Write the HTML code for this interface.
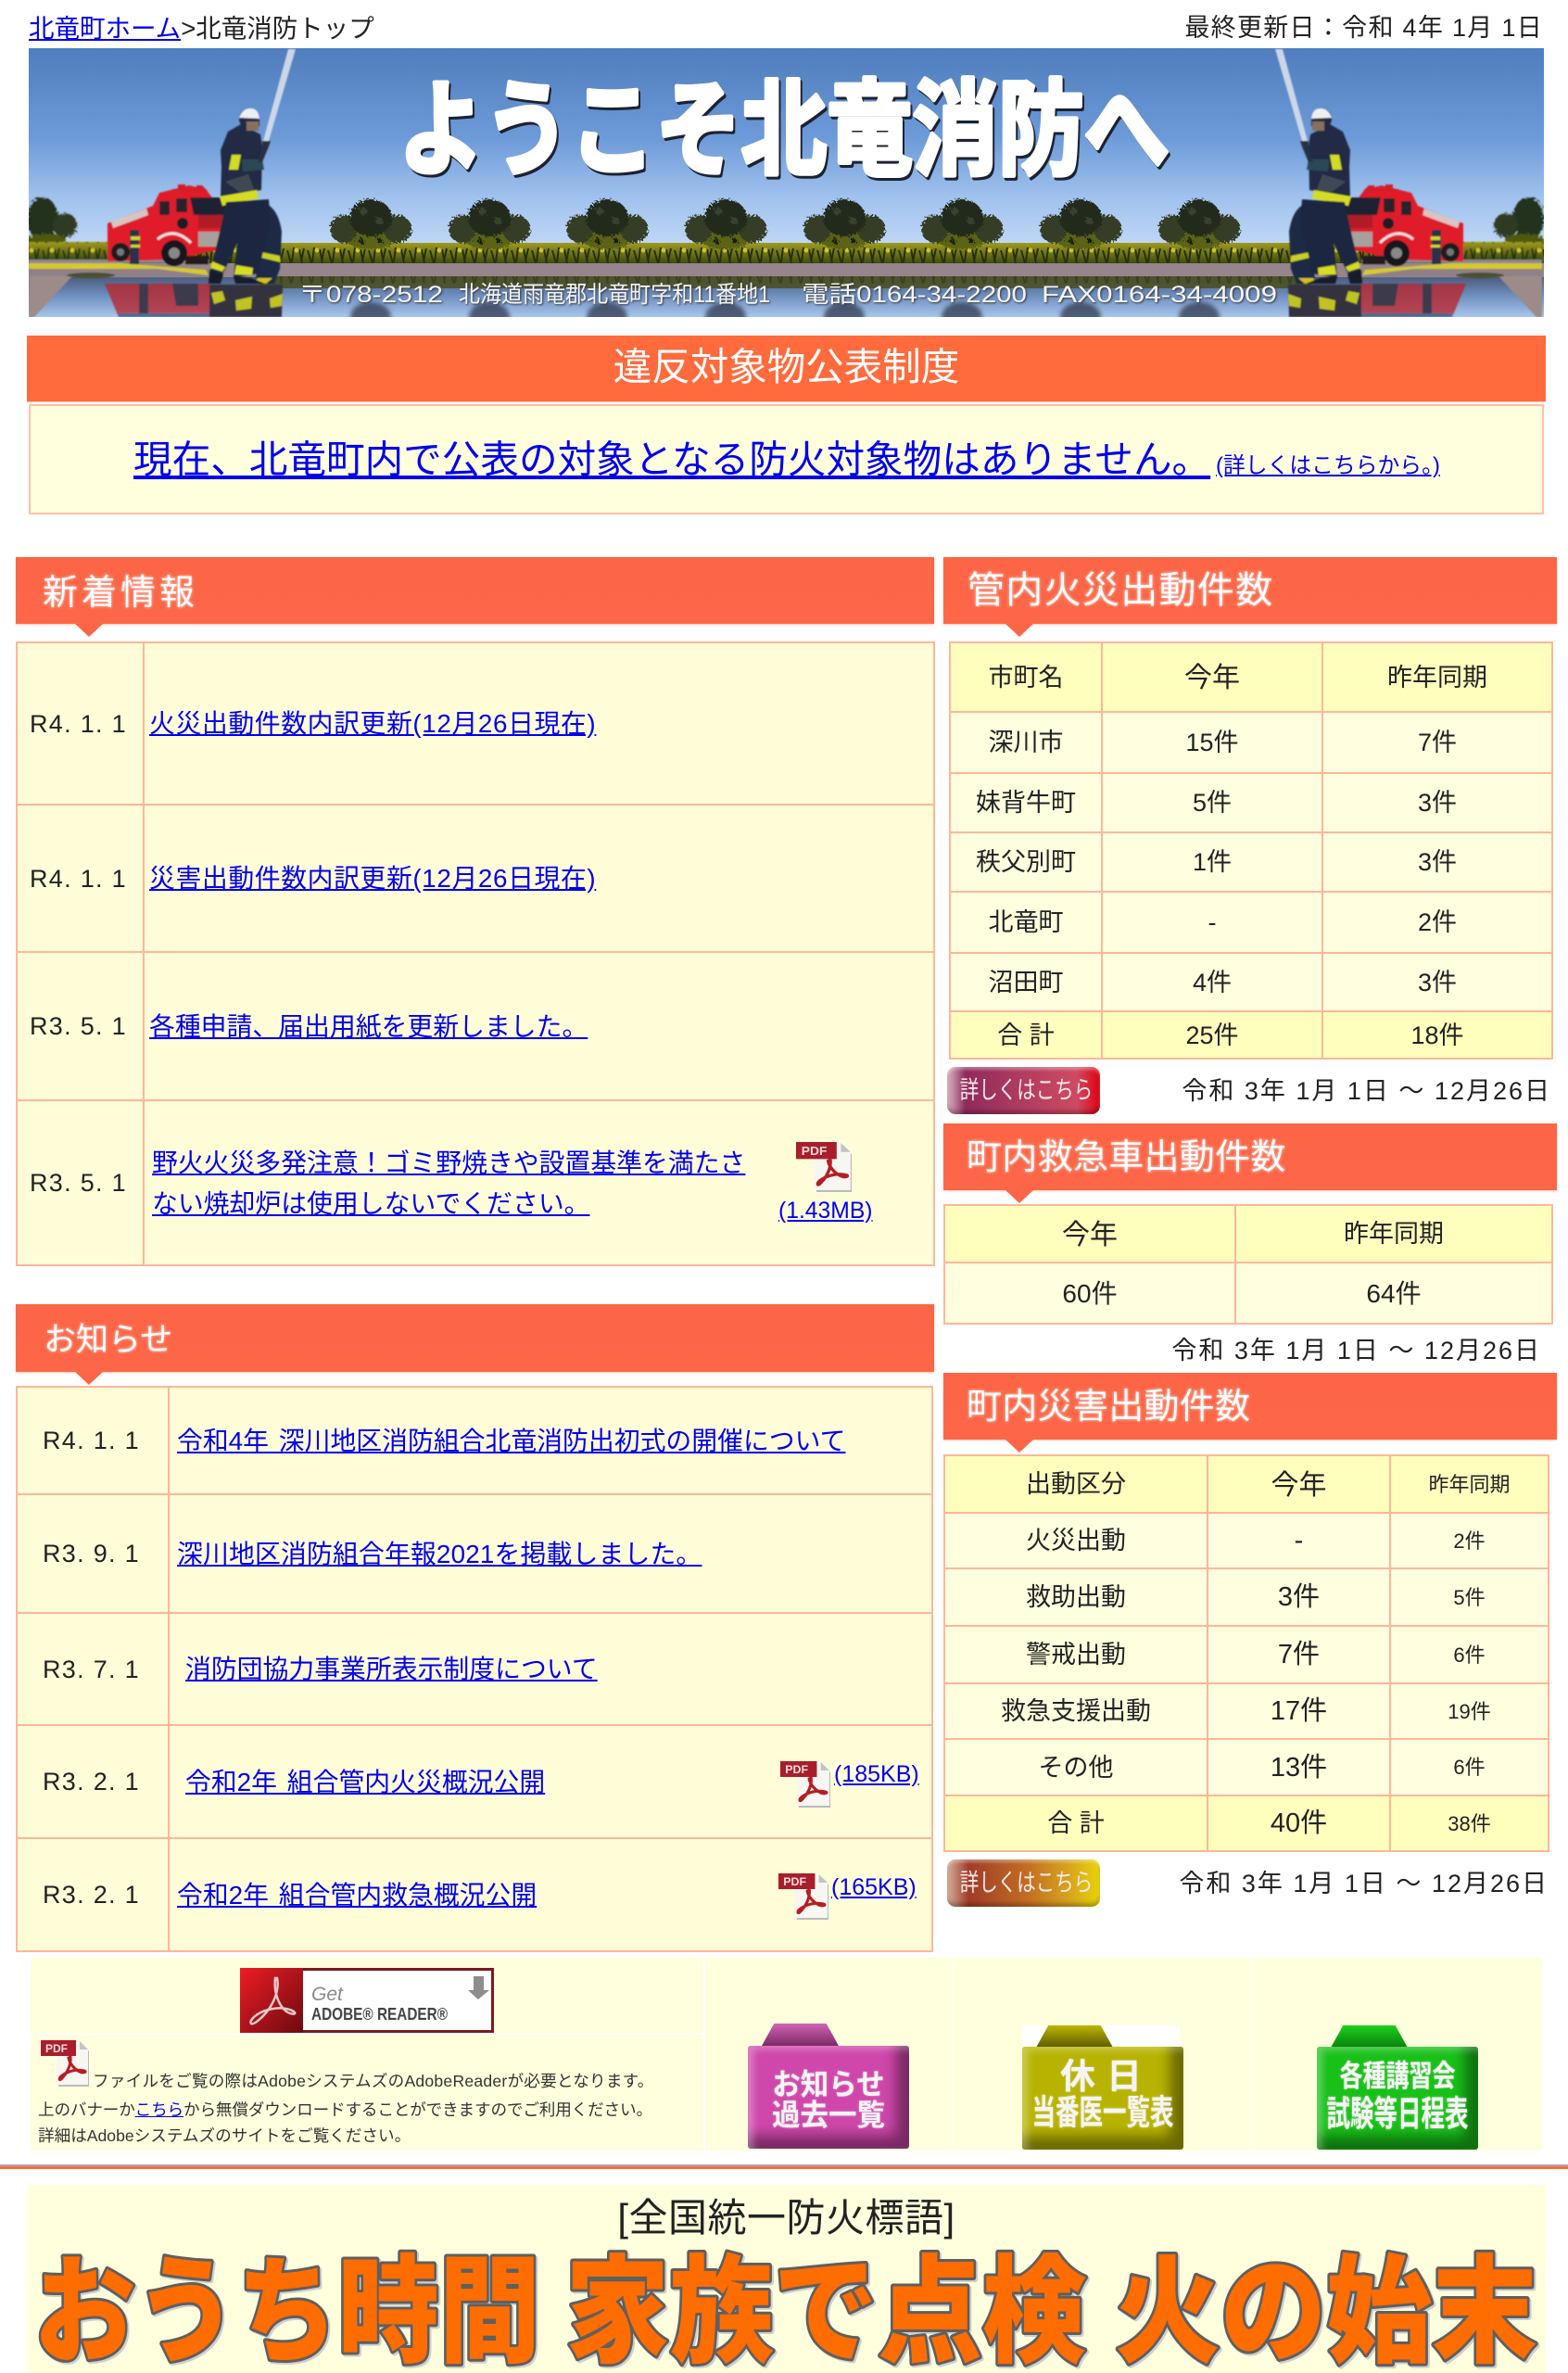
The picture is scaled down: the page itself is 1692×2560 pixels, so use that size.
<!DOCTYPE html>
<html lang="ja"><head><meta charset="utf-8"><title>北竜消防</title>
<style>
html,body{margin:0;padding:0;background:#fff}
body{position:relative;width:1692px;height:2560px;overflow:hidden;font-family:"Liberation Sans","Noto Sans CJK JP",sans-serif;color:#222}
a{color:#0000ee;text-decoration:underline}
.a{position:absolute;white-space:nowrap;line-height:1}
.bar{position:absolute;background:linear-gradient(#fc6546,#fd6748);box-shadow:0 1px 2px rgba(255,160,130,.6)}
.bar:after{content:"";position:absolute;left:var(--t);bottom:-14px;border-left:15px solid transparent;border-right:15px solid transparent;border-top:14px solid #fc6546}
.bt{position:absolute;color:#fff;white-space:nowrap;line-height:1;text-shadow:0 0 3px rgba(255,255,255,.75);font-weight:400}
table{position:absolute;border-collapse:collapse;table-layout:fixed;margin:0}
td{border:2px solid #ffb699;padding:2px 0 0;text-align:center;vertical-align:middle;line-height:1.1;white-space:nowrap;background:#ffffdf;font-size:27px}
td.h{background:#ffffbd}
.l td{background:#fffdd8;text-align:left;font-size:27.85px}
.l td:first-child{font-size:27px;letter-spacing:1.3px}
.l a{word-spacing:3px}
.n{letter-spacing:.6px}
.d{letter-spacing:2px;font-size:27px}
.btn{position:absolute;left:1022px;width:165px;height:51px;border-radius:9px;color:#f6e8e8;font-size:20.5px;line-height:51px;text-align:center;box-shadow:inset 0 3px 3px rgba(255,255,255,.35),inset 0 -4px 4px rgba(0,0,0,.25)}
.btn span{display:inline-block;transform:translateX(3px) scaleY(1.3)}
.fd{position:absolute;width:174px;height:111px;border-radius:3px;color:#f6f4f4;font-weight:700;text-align:center;box-shadow:inset 6px 4px 8px rgba(255,255,255,.3),inset -14px -14px 14px rgba(0,0,0,.42)}
.tab{position:absolute;width:83px;height:24px;clip-path:polygon(16% 0,84% 0,100% 100%,0 100%)}
.fd div{position:absolute;left:0;right:0;line-height:1;white-space:nowrap;text-shadow:0 0 2px rgba(255,255,255,.5)}
.fd span{display:inline-block}
</style></head><body>

<svg width="0" height="0" style="position:absolute"><defs>
<symbol id="pdf" viewBox="0 0 52 50" preserveAspectRatio="none">
<path d="M18 2H42L52 12V50H18Z" fill="#bbb" transform="translate(1 1)"/>
<path d="M17 1H42L51 10V48H17Z" fill="#f8f6f0"/>
<path d="M42 1V10H51Z" fill="#c4c4c4"/>
<rect x="0" y="0" width="38" height="17" fill="#a91e2c"/>
<text x="5" y="13" font-size="12" font-weight="700" fill="#f2dcdc" font-family="Liberation Sans,sans-serif">PDF</text>
<path d="M32 18C33 27 28 36 22 42C20 44 19 41 23 38C30 33 39 31 47 33C50 34 46 36 42 34C36 31 31 25 30 19Z" fill="none" stroke="#b51d24" stroke-width="3"/>
</symbol>
<linearGradient id="sky" x1="0" y1="0" x2="0" y2="1"><stop offset="0" stop-color="#4f7dbd"/><stop offset=".45" stop-color="#6d9ad8"/><stop offset=".75" stop-color="#a0c2ee"/><stop offset="1" stop-color="#c2d8f6"/></linearGradient>
<linearGradient id="wat" x1="0" y1="0" x2="0" y2="1"><stop offset="0" stop-color="#4a5a7a"/><stop offset=".45" stop-color="#6c8cbc"/><stop offset="1" stop-color="#a8c6ec"/></linearGradient>
<linearGradient id="hed" x1="0" y1="0" x2="0" y2="1"><stop offset="0" stop-color="#a09a20"/><stop offset=".6" stop-color="#666d14"/><stop offset="1" stop-color="#3c4a10"/></linearGradient>
<pattern id="hp" width="22" height="22" patternUnits="userSpaceOnUse" x="0" y="264"><path d="M2 6l4 14M9 3l-2 16M15 5l3 15M20 4l-3 14" stroke="#26300c" stroke-width="2" fill="none"/><circle cx="12" cy="6" r="2.5" fill="#d0c22e"/></pattern>
<filter id="rough" x="-15%" y="-15%" width="130%" height="130%"><feTurbulence type="fractalNoise" baseFrequency=".45" numOctaves="2" seed="3"/><feDisplacementMap in="SourceGraphic" scale="9"/></filter>
<filter id="bl"><feGaussianBlur stdDeviation="2.5"/></filter>
<filter id="bs"><feGaussianBlur stdDeviation=".8"/></filter>
<g id="tree" filter="url(#rough)">
<ellipse cx="0" cy="258" rx="27" ry="11" fill="#5a6412"/>
<circle cx="-29" cy="247" r="15" fill="#343c26"/><circle cx="29" cy="247" r="15" fill="#343c26"/>
<ellipse cx="0" cy="235" rx="23" ry="20" fill="#232b1b"/>
<circle cx="-8" cy="228" r="4" fill="#3a4230"/><circle cx="9" cy="238" r="4" fill="#3a4230"/>
<circle cx="-10" cy="260" r="3" fill="#141a08"/><circle cx="10" cy="260" r="3" fill="#141a08"/>
</g>
<g id="side">
<path d="M311 53H319L290 152H284Z" fill="#d9dfea" opacity=".9"/>
<g filter="url(#rough)"><ellipse cx="46" cy="236" rx="17" ry="23" fill="#23301a"/><circle cx="70" cy="243" r="13" fill="#2e3a22"/><ellipse cx="50" cy="260" rx="22" ry="8" fill="#4d5a10"/></g>
<rect x="31" y="261" width="85" height="19" fill="url(#hed)"/><rect x="31" y="261" width="85" height="19" fill="url(#hp)"/>
<rect x="31" y="280" width="195" height="4" fill="#8c8890"/>
<rect x="31" y="291" width="195" height="8" fill="#8f8087"/>
<path d="M31 298H78L37 342H31Z" fill="#9c8b88"/>
<path d="M31 284H130L222 291L225 297L170 290H31Z" fill="#d6c92e"/>
<ellipse cx="98" cy="297" rx="26" ry="3" fill="#4a5030"/>
<!-- truck -->
<path d="M116 241L165 222L172 208L204 200L222 204L243 232V268L188 280L116 282Z" fill="#e01f2b"/>
<path d="M186 204h6v-5h8v5h12v-4h6l6 6H186Z" fill="#d41a26"/>
<path d="M205 213H243L245 232H209Z" fill="#1c2433"/>
<path d="M172 217H183V232H172ZM190 214H202V229H190Z" fill="#2a242a"/>
<circle cx="197" cy="241" r="6" fill="#1c1c24"/>
<path d="M214 232H243V246H214Z" fill="#b01c28"/>
<path d="M214 250H243V266H214Z" fill="#a8a09c"/>
<path d="M120 239L158 225L160 232L122 246Z" fill="#d9c4c4"/>
<path d="M170 258Q188 244 206 262" fill="none" stroke="#efe4e4" stroke-width="3"/>
<circle cx="188" cy="273" r="14" fill="#17171a"/><circle cx="188" cy="273" r="6" fill="#888"/>
<circle cx="130" cy="272" r="10" fill="#1c1a1c"/><circle cx="130" cy="272" r="4" fill="#777"/>
<rect x="200" y="276" width="25" height="9" fill="#221c1e"/>
<path d="M140 248H150V285H140Z" fill="#2b3348"/><rect x="141" y="255" width="10" height="4" fill="#cfd82a"/><rect x="141" y="264" width="10" height="3" fill="#cfd82a"/>
<!-- rear firefighter -->
<path d="M282 218Q300 222 304 250L302 290L296 306H276L278 270Z" fill="#1c2944"/>
<path d="M282 272L302 276L303 283L282 278Z" fill="#c8d022"/>
<path d="M294 300H278L274 306H287Z" fill="#d4c21e"/>
<!-- front firefighter -->
<path d="M246 142L260 134L281 145L283 158L282 205L238 213L239 180L238 162Z" fill="#202c44"/>
<path d="M258 130Q258 117 270 118Q280 118 280 130L280 136L262 140Z" fill="#202c44"/>
<path d="M258 127Q262 116 272 117Q279 118 280 128Z" fill="#eef0f0"/>
<rect x="266" y="131" width="13" height="10" fill="#8a705c"/>
<path d="M261 172H283L285 183L262 185Z" fill="#2c4a56"/>
<path d="M283 152H292L290 158L283 175H278L283 160Z" fill="#283040"/>
<path d="M250 167H260L257 183H247Z" fill="#d3dc22"/>
<path d="M243 196L268 188L275 207H258Z" fill="#3f4a52"/>
<path d="M237 212L277 205L279 214L240 222Z" fill="#d6dc20"/>
<path d="M244 218L290 215L292 240L278 295L252 300L256 262L240 296L227 292L236 255Z" fill="#1b2740"/>
<path d="M229 282L243 288L240 293L227 289Z" fill="#d6dc20"/>
<path d="M255 286L273 289L272 297L253 296Z" fill="#d6dc20"/>
<path d="M226 291L241 296L238 306H225ZM252 298L271 300L286 306H254Z" fill="#161c2c"/>
<!-- reflection -->
<path d="M113 306H226L226 342H128Z" fill="#b82430" opacity=".8"/>
<path d="M150 306H160V342H150ZM186 306H214V330H190Z" fill="#3d3a4c"/>
<path d="M128 338H226V342H128Z" fill="#506890"/>
<path d="M226 307H305L304 342H226Z" fill="#34303f"/>
<path d="M228 316L240 314L243 324L231 328ZM254 324L272 320L271 333L255 335ZM291 322L305 317L304 330L292 332Z" fill="#c0c420"/>
</g>
</defs></svg>

<div class="a" style="left:31px;top:17px;font-size:27.5px"><a>北竜町ホーム</a>&gt;北竜消防トップ</div>
<div class="a" style="right:27px;top:17px;font-size:27px;letter-spacing:1.3px">最終更新日：令和 4年 1月 1日</div>

<!-- Banner -->
<svg class="a" style="left:31px;top:52px" width="1635" height="290" viewBox="31 52 1635 290">
<rect x="31" y="52" width="1635" height="215" fill="url(#sky)"/>
<rect x="31" y="298" width="1635" height="44" fill="url(#wat)"/>
<rect x="31" y="284" width="1635" height="15" fill="#96858c"/>
<rect x="31" y="262" width="1635" height="22" fill="url(#hed)"/>
<rect x="31" y="262" width="1635" height="22" fill="url(#hp)"/>
<rect x="280" y="298" width="1135" height="13" fill="#4a4f20" opacity=".85"/>
<rect x="280" y="298" width="1135" height="13" fill="url(#hp)" opacity=".5"/>
<use href="#tree" x="400"/><use href="#tree" x="528"/><use href="#tree" x="655"/><use href="#tree" x="783"/><use href="#tree" x="911"/><use href="#tree" x="1038"/><use href="#tree" x="1166"/><use href="#tree" x="1294"/>
<g fill="#23263a" opacity=".65" filter="url(#bl)"><ellipse cx="400" cy="342" rx="22" ry="16"/><ellipse cx="528" cy="342" rx="22" ry="16"/><ellipse cx="655" cy="342" rx="22" ry="16"/><ellipse cx="783" cy="342" rx="22" ry="16"/><ellipse cx="911" cy="342" rx="22" ry="16"/><ellipse cx="1038" cy="342" rx="22" ry="16"/><ellipse cx="1166" cy="342" rx="22" ry="16"/><ellipse cx="1294" cy="342" rx="22" ry="16"/></g>
<g filter="url(#bs)"><use href="#side"/></g>
<g filter="url(#bs)"><use href="#side" transform="translate(1695 0) scale(-1 1)"/></g>
<g style="filter:drop-shadow(2px 3px 0 #1c2230)">
<text x="430" y="179" font-size="112" font-weight="700" fill="#fff" stroke="#fff" stroke-width="5" stroke-linejoin="round" textLength="832" lengthAdjust="spacingAndGlyphs" font-family="Noto Sans CJK JP,sans-serif">ようこそ北竜消防へ</text>
</g>
<g fill="#f4f4f4" font-size="25" font-family="Liberation Sans,Noto Sans CJK JP,sans-serif" style="filter:drop-shadow(1px 1px 1px #333)">
<text x="322" y="326" textLength="156" lengthAdjust="spacingAndGlyphs">〒078-2512</text>
<text x="495" y="326" textLength="336" lengthAdjust="spacingAndGlyphs">北海道雨竜郡北竜町字和11番地1</text>
<text x="865" y="326" textLength="243" lengthAdjust="spacingAndGlyphs">電話0164-34-2200</text>
<text x="1124" y="326" textLength="254" lengthAdjust="spacingAndGlyphs">FAX0164-34-4009</text>
</g>
</svg>

<!-- 違反 -->
<div class="a" style="left:29px;top:362px;width:1639px;height:71px;background:#ff6b3d;color:#fff;text-align:center;font-size:41.5px;line-height:68px;box-shadow:0 1px 0 #ffc4ad">違反対象物公表制度</div>
<div class="a" style="left:31px;top:436px;width:1631px;height:115px;background:#ffffdd;border:2px solid #ffbfa6"></div>
<div class="a" style="left:144px;top:475px;font-size:41.6px"><a>現在、北竜町内で公表の対象となる防火対象物はありません。</a></div>
<div class="a" style="left:1312px;top:491px;font-size:23.8px"><a>(詳しくはこちらから。)</a></div>

<!-- 新着情報 -->
<div class="bar" style="left:17px;top:601px;width:991px;height:72px;--t:64px"></div>
<div class="bt" style="left:46px;top:621px;font-size:38px;letter-spacing:4px">新着情報</div>
<table class="l" style="left:17px;top:692px;width:990px">
<colgroup><col style="width:137px"><col style="width:853px"></colgroup>
<tr style="height:175px"><td style="padding-left:13px">R4. 1. 1</td><td style="padding-left:5px"><a class="n">火災出動件数内訳更新(12月26日現在)</a></td></tr>
<tr style="height:159px"><td style="padding-left:13px">R4. 1. 1</td><td style="padding-left:5px"><a class="n">災害出動件数内訳更新(12月26日現在)</a></td></tr>
<tr style="height:160px"><td style="padding-left:13px">R3. 5. 1</td><td style="padding-left:5px"><a>各種申請、届出用紙を更新しました。</a></td></tr>
<tr style="height:178px"><td style="padding-left:13px">R3. 5. 1</td><td style="padding-left:8px;line-height:44px"><a>野火火災多発注意！ゴミ野焼きや設置基準を満たさ<br>ない焼却炉は使用しないでください。</a></td></tr>
</table>
<svg class="a" style="left:859px;top:1232px" width="60" height="54"><use href="#pdf" width="60" height="54"/></svg>
<div class="a" style="left:840px;top:1295px;font-size:24.7px"><a>(1.43MB)</a></div>

<!-- お知らせ -->
<div class="bar" style="left:17px;top:1407px;width:991px;height:73px;--t:64px"></div>
<div class="bt" style="left:47px;top:1428px;font-size:35px">お知らせ</div>
<table class="l" style="left:17px;top:1495px;width:988px">
<colgroup><col style="width:164px"><col style="width:824px"></colgroup>
<tr style="height:116px"><td style="padding-left:27px">R4. 1. 1</td><td style="padding-left:8px"><a>令和4年 深川地区消防組合北竜消防出初式の開催について</a></td></tr>
<tr style="height:128px"><td style="padding-left:27px">R3. 9. 1</td><td style="padding-left:8px"><a class="n" style="letter-spacing:.15px">深川地区消防組合年報2021を掲載しました。 </a></td></tr>
<tr style="height:121px"><td style="padding-left:27px">R3. 7. 1</td><td style="padding-left:17px"><a>消防団協力事業所表示制度について</a></td></tr>
<tr style="height:122px"><td style="padding-left:27px">R3. 2. 1</td><td style="padding-left:17px"><a>令和2年 組合管内火災概況公開</a></td></tr>
<tr style="height:122px"><td style="padding-left:27px">R3. 2. 1</td><td style="padding-left:8px"><a>令和2年 組合管内救急概況公開</a></td></tr>
</table>
<svg class="a" style="left:842px;top:1900px" width="54" height="50"><use href="#pdf" width="54" height="50"/></svg>
<div class="a" style="left:900px;top:1902px;font-size:25px"><a>(185KB)</a></div>
<svg class="a" style="left:840px;top:2021px" width="54" height="50"><use href="#pdf" width="54" height="50"/></svg>
<div class="a" style="left:897px;top:2024px;font-size:25px"><a>(165KB)</a></div>

<!-- 管内火災 -->
<div class="bar" style="left:1018px;top:601px;width:662px;height:72px;--t:67px"></div>
<div class="bt" style="left:1044px;top:617px;font-size:40px;letter-spacing:1.3px">管内火災出動件数</div>
<table style="left:1024px;top:692px;width:650px">
<colgroup><col style="width:164px"><col style="width:238px"><col style="width:248px"></colgroup>
<tr style="height:75px"><td class="h">市町名</td><td class="h" style="font-size:30px">今年</td><td class="h">昨年同期</td></tr>
<tr style="height:66px"><td>深川市</td><td>15件</td><td>7件</td></tr>
<tr style="height:64px"><td>妹背牛町</td><td>5件</td><td>3件</td></tr>
<tr style="height:64px"><td>秩父別町</td><td>1件</td><td>3件</td></tr>
<tr style="height:66px"><td>北竜町</td><td>-</td><td>2件</td></tr>
<tr style="height:63px"><td>沼田町</td><td>4件</td><td>3件</td></tr>
<tr style="height:51px"><td class="h">合 計</td><td class="h">25件</td><td class="h">18件</td></tr>
</table>
<div class="btn" style="top:1151px;background:linear-gradient(90deg,#dcb8c4 0,#8f2a5c 12%,#b23c60 50%,#cf4a62 85%,#e00010 100%)"><span>詳しくはこちら</span></div>
<div class="a d" style="right:18px;top:1164px">令和 3年 1月 1日 〜 12月26日</div>

<!-- 救急車 -->
<div class="bar" style="left:1018px;top:1212px;width:662px;height:72px;--t:67px"></div>
<div class="bt" style="left:1043px;top:1230px;font-size:38px;letter-spacing:.3px">町内救急車出動件数</div>
<table style="left:1018px;top:1299px;width:656px">
<colgroup><col style="width:314px"><col style="width:342px"></colgroup>
<tr style="height:62px"><td class="h" style="font-size:30px">今年</td><td class="h">昨年同期</td></tr>
<tr style="height:66px"><td style="font-size:28px">60件</td><td style="font-size:28px">64件</td></tr>
</table>
<div class="a d" style="right:29px;top:1444px">令和 3年 1月 1日 〜 12月26日</div>

<!-- 災害 -->
<div class="bar" style="left:1018px;top:1481px;width:662px;height:72px;--t:67px"></div>
<div class="bt" style="left:1043px;top:1499px;font-size:38px;letter-spacing:.3px">町内災害出動件数</div>
<table style="left:1018px;top:1569px;width:652px">
<colgroup><col style="width:284px"><col style="width:197px"><col style="width:171px"></colgroup>
<tr style="height:62px"><td class="h">出動区分</td><td class="h" style="font-size:30px">今年</td><td class="h" style="font-size:22px">昨年同期</td></tr>
<tr style="height:60px"><td>火災出動</td><td style="font-size:29px">-</td><td style="font-size:22px">2件</td></tr>
<tr style="height:62px"><td>救助出動</td><td style="font-size:29px">3件</td><td style="font-size:22px">5件</td></tr>
<tr style="height:62px"><td>警戒出動</td><td style="font-size:29px">7件</td><td style="font-size:22px">6件</td></tr>
<tr style="height:60px"><td>救急支援出動</td><td style="font-size:29px">17件</td><td style="font-size:22px">19件</td></tr>
<tr style="height:61px"><td>その他</td><td style="font-size:29px">13件</td><td style="font-size:22px">6件</td></tr>
<tr style="height:60px"><td class="h">合 計</td><td class="h" style="font-size:29px">40件</td><td class="h" style="font-size:22px">38件</td></tr>
</table>
<div class="btn" style="top:2006px;background:linear-gradient(90deg,#d6b09c 0,#a03c28 14%,#c06a22 50%,#d8a41c 80%,#e8d408 100%)"><span>詳しくはこちら</span></div>
<div class="a d" style="right:21px;top:2019px">令和 3年 1月 1日 〜 12月26日</div>

<!-- bottom table -->
<div class="a" style="left:33px;top:2112px;width:1631px;height:208px;background:#ffffdd"></div>
<div class="a" style="left:33px;top:2193px;width:726px;height:2px;background:#fff"></div>
<div class="a" style="left:759px;top:2112px;width:2px;height:208px;background:#fff"></div>
<div class="a" style="left:1027px;top:2112px;width:2px;height:208px;background:#fffff0"></div>
<div class="a" style="left:1349px;top:2112px;width:2px;height:208px;background:#fffff0"></div>

<!-- Adobe -->
<svg class="a" style="left:259px;top:2123px" width="274" height="70">
<defs><linearGradient id="ar" x1="0" y1="0" x2="1" y2="1"><stop offset="0" stop-color="#ee1c25"/><stop offset="1" stop-color="#6d0a10"/></linearGradient></defs>
<rect width="274" height="70" fill="#7a1a20"/><rect width="68" height="70" fill="url(#ar)"/>
<rect x="68" y="3" width="203" height="64" fill="#fff"/>
<path d="M40 11C43 25 35 45 18 58C11 63 9 59 15 53C25 44 46 40 58 47C62 50 56 51 50 47C42 41 36 26 38 11Z" fill="none" stroke="#e8c8c8" stroke-width="2.5"/>
<text x="77" y="35" font-size="21" font-style="italic" fill="#8a8a8a" font-family="Liberation Sans,sans-serif">Get</text>
<text x="77" y="56" font-size="18.5" font-weight="700" fill="#444" font-family="Liberation Sans,sans-serif" textLength="147" lengthAdjust="spacingAndGlyphs">ADOBE® READER®</text>
<path d="M252 9H263V24H269L257 34L246 24H252Z" fill="#8d8d8d"/>
</svg>
<svg class="a" style="left:44px;top:2201px" width="52" height="50"><use href="#pdf" width="52" height="50"/></svg>
<div class="a" style="left:100px;top:2237px;font-size:17.6px;color:#333;letter-spacing:.22px">ファイルをご覧の際はAdobeシステムズのAdobeReaderが必要となります。</div>
<div class="a" style="left:41px;top:2268px;font-size:17.6px;color:#333;letter-spacing:-.15px">上のバナーか<a>こちら</a>から無償ダウンロードすることができますのでご利用ください。</div>
<div class="a" style="left:41px;top:2296px;font-size:17.6px;color:#333">詳細はAdobeシステムズのサイトをご覧ください。</div>

<!-- Folders -->
<div class="tab" style="left:822px;top:2183px;background:linear-gradient(#d264b4,#7c2a66)"></div>
<div class="fd" style="left:807px;top:2207px;background:#cf47ab">
<div style="top:27px;font-size:30.5px"><span style="transform:scaleY(1.05)">お知らせ</span></div><div style="top:60px;font-size:30.5px"><span style="transform:scaleY(1.05)">過去一覧</span></div></div>
<div class="a" style="left:1103px;top:2185px;width:170px;height:22px;background:#fff"></div>
<div class="tab" style="left:1118px;top:2185px;background:linear-gradient(#bdb600,#5c5a00)"></div>
<div class="fd" style="left:1103px;top:2208px;background:#b7b300">
<div style="top:14px;font-size:38px;letter-spacing:12px;text-indent:8px">休日</div><div style="top:60px;font-size:25.5px"><span style="transform:scaleY(1.45)">当番医一覧表</span></div></div>
<div class="tab" style="left:1436px;top:2185px;background:linear-gradient(#1fd01f,#0a800a)"></div>
<div class="fd" style="left:1421px;top:2208px;background:#18c018">
<div style="top:20px;font-size:25px"><span style="transform:scaleY(1.3)">各種講習会</span></div><div style="top:62px;font-size:25.5px"><span style="transform:scaleY(1.5)">試験等日程表</span></div></div>

<!-- rule -->
<div class="a" style="left:0;top:2335px;width:1692px;height:2px;background:#a8a8a8"></div>
<div class="a" style="left:0;top:2337px;width:1692px;height:3px;background:#ff6b3d"></div>

<!-- slogan -->
<div class="a" style="left:29px;top:2372px;width:1639px;height:188px;background:#ffffdd;box-shadow:0 -15px 0 #ffffdd"></div>
<div class="a" style="left:29px;top:2372px;width:1639px;text-align:center;font-size:42px;letter-spacing:.5px;color:#222">[全国統一防火標語]</div>
<svg class="a" style="left:0;top:2400px;overflow:visible" width="1692" height="160" viewBox="0 2400 1692 160">
<g font-family="Noto Sans CJK JP,sans-serif" font-size="126" font-weight="900" fill="#ff6c00" stroke="#5f5f5f" stroke-width="6" stroke-linejoin="round" paint-order="stroke" style="filter:drop-shadow(2px 2px 0 #cfcfcf)">
<text x="37" y="2538" textLength="546" lengthAdjust="spacingAndGlyphs">おうち時間</text>
<text x="610" y="2538" textLength="562" lengthAdjust="spacingAndGlyphs">家族で点検</text>
<text x="1203" y="2538" textLength="456" lengthAdjust="spacingAndGlyphs">火の始末</text>
</g></svg>
</body></html>
